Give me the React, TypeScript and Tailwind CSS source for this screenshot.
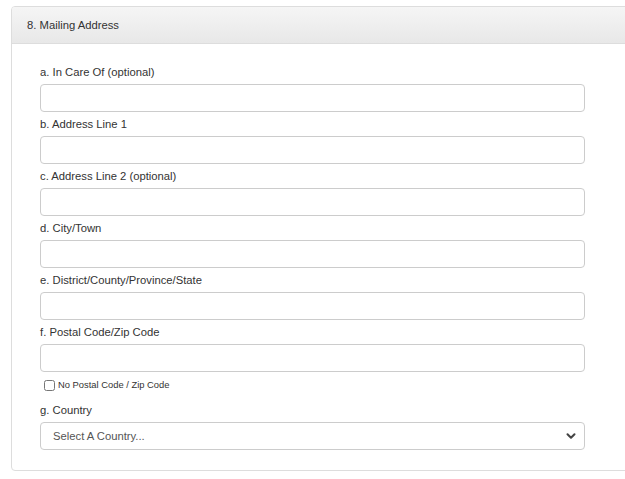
import { ChevronDown } from 'lucide-react';

const FIELDS = [
  'a. In Care Of (optional)',
  'b. Address Line 1',
  'c. Address Line 2 (optional)',
  'd. City/Town',
  'e. District/County/Province/State',
  'f. Postal Code/Zip Code',
];

function Field({ label }: { label: string }) {
  return (
    <div className="mb-1">
      <label className="block h-4 leading-4 mb-1 text-[11.25px] text-[#333]">{label}</label>
      <input
        type="text"
        className="block w-[545px] h-[28px] bg-white border border-[#ccc] rounded-[4px] px-3 text-[12px] text-[#555] outline-none"
      />
    </div>
  );
}

export default function App() {
  return (
    <div className="min-h-screen bg-white pt-[6px] pl-[11px] overflow-hidden" style={{ fontFamily: '"Liberation Sans", Arial, sans-serif' }}>
      <div className="w-[640px] border border-[#ddd] rounded-[4px] bg-white">
        <div className="h-[37px] flex items-center px-[15px] border-b border-[#ddd] rounded-t-[3px] bg-gradient-to-b from-[#f5f5f5] to-[#e8e8e8] text-[11.25px] text-[#333]">
          8. Mailing Address
        </div>
        <div className="pt-5 pb-5 pl-[28px]">
          {FIELDS.map((f) => (
            <Field key={f} label={f} />
          ))}
          <div className="h-[26px] flex items-center pl-[4px] gap-[3px] -mt-1">
            <input type="checkbox" className="w-[11px] h-[11px] m-0" />
            <span className="text-[9.4px] text-[#333]">No Postal Code / Zip Code</span>
          </div>
          <div className="mt-1">
            <label className="block h-4 leading-4 mb-1 text-[11.25px] text-[#333]">g. Country</label>
            <div className="relative w-[545px] h-[28px] border border-[#ccc] rounded-[4px] bg-white flex items-center pl-3 text-[11.25px] text-[#555]">
              Select A Country...
              <ChevronDown size={14} strokeWidth={3.5} className="absolute right-[6px] top-[6px] text-[#444]" />
            </div>
          </div>
        </div>
      </div>
    </div>
  );
}
